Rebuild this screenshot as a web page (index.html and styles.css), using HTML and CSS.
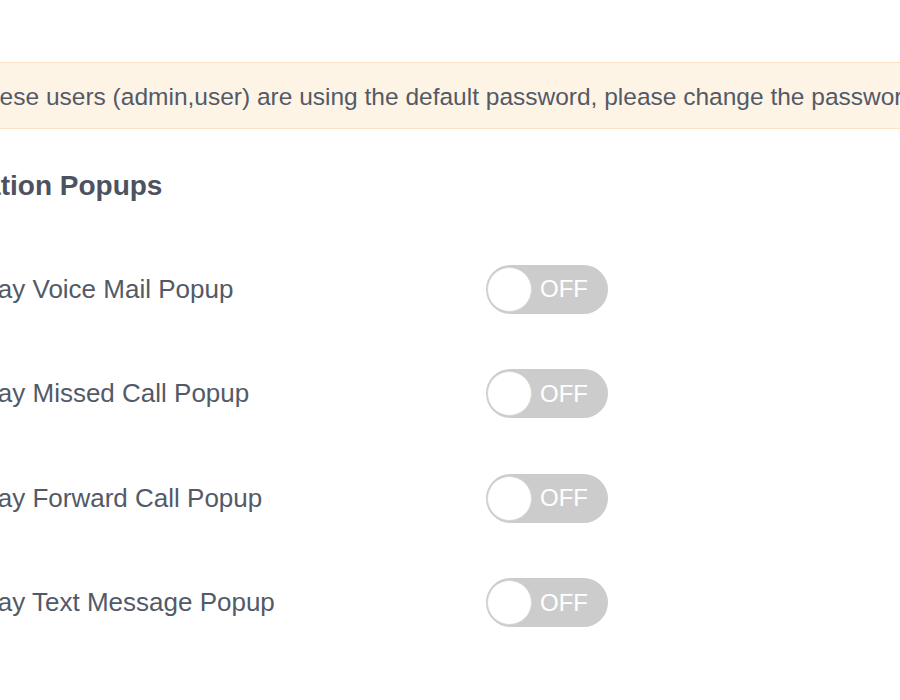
FILE: index.html
```html
<!DOCTYPE html>
<html>
<head>
<meta charset="utf-8">
<link rel="stylesheet" href="styles.css">
</head>
<body>
<div class="viewport">
  <div class="page">
    <div class="alert">These users (admin,user) are using the default password, please change the password as soon as possible.</div>
    <h2 class="heading">Notification Popups</h2>
    <div class="rows">
      <div class="row">
        <span class="label">Display Voice Mail Popup</span>
        <span class="toggle"><span class="knob"></span><span class="state">OFF</span></span>
      </div>
      <div class="row">
        <span class="label">Display Missed Call Popup</span>
        <span class="toggle"><span class="knob"></span><span class="state">OFF</span></span>
      </div>
      <div class="row">
        <span class="label">Display Forward Call Popup</span>
        <span class="toggle"><span class="knob"></span><span class="state">OFF</span></span>
      </div>
      <div class="row">
        <span class="label">Display Text Message Popup</span>
        <span class="toggle"><span class="knob"></span><span class="state">OFF</span></span>
      </div>
    </div>
  </div>
</div>
</body>
</html>
```
FILE: styles.css
```css
html, body {
  margin: 0;
  padding: 0;
  background: #ffffff;
}
.viewport {
  width: 900px;
  height: 700px;
  overflow: hidden;
}
.page {
  margin-left: -110px;
  width: 1400px;
  padding-top: 62px;
  font-family: "Liberation Sans", Arial, sans-serif;
  color: #535a67;
}
.alert {
  box-sizing: border-box;
  height: 67px;
  background: #fef4e5;
  border: 1px solid #fbe2c0;
  border-radius: 4px;
  padding: 3px 0 0 80px;
  font-size: 24.5px;
  line-height: 62px;
  white-space: nowrap;
}
.heading {
  margin: 0;
  padding-top: 29px;
  padding-left: 8px;
  height: 56px;
  line-height: 56px;
  font-size: 28px;
  font-weight: bold;
  color: #4c5260;
}
.rows {
  padding-left: 50px;
  padding-top: 23px;
}
.row {
  display: flex;
  align-items: center;
  height: 104.5px;
}
.label {
  width: 546px;
  font-size: 26px;
}
.toggle {
  box-sizing: border-box;
  width: 122px;
  height: 49px;
  border-radius: 25px;
  background: #cccccc;
  display: flex;
  align-items: center;
  padding-left: 1px;
}
.knob {
  box-sizing: border-box;
  width: 45px;
  height: 45px;
  border-radius: 50%;
  background: #ffffff;
  border: 1px solid #d6d6d6;
}
.state {
  flex: 1;
  text-align: center;
  color: #ffffff;
  font-size: 24px;
  padding-right: 12px;
}
```
